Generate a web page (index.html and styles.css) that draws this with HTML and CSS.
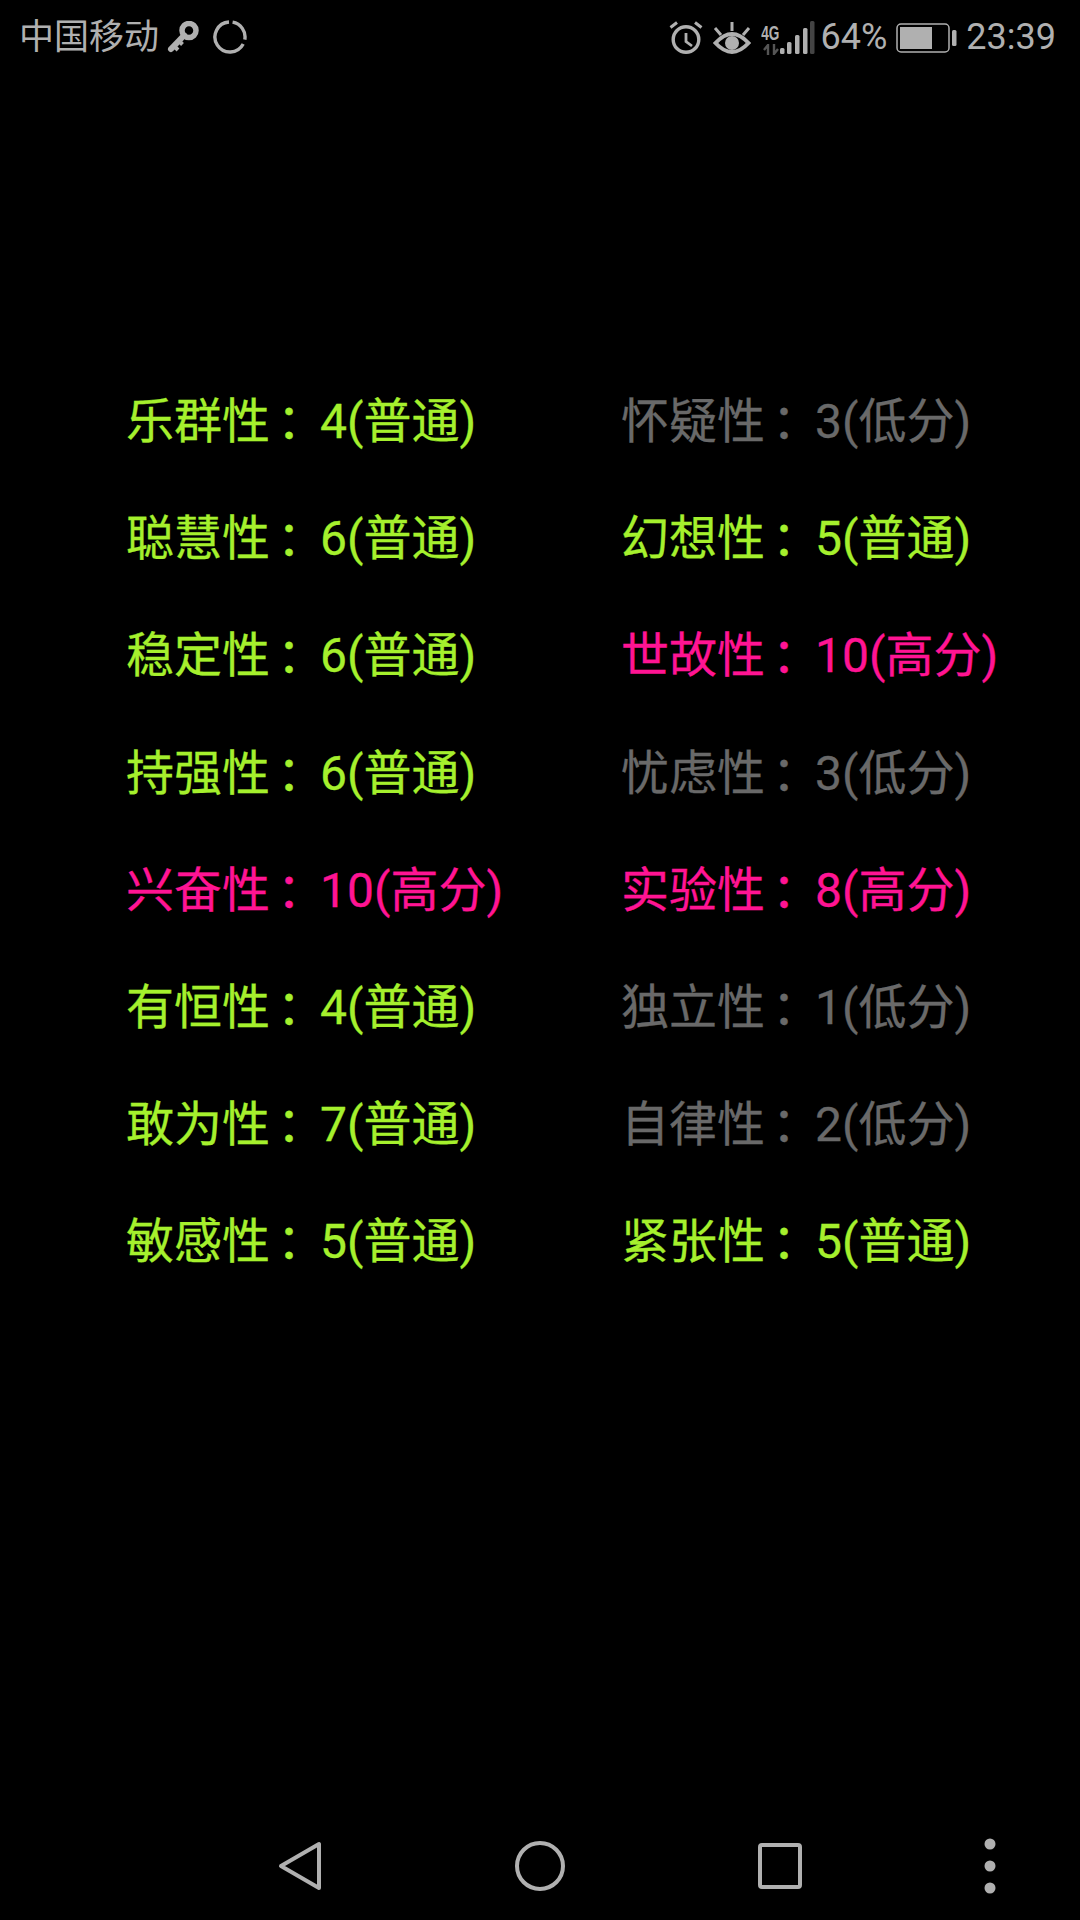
FILE: index.html
```html
<!DOCTYPE html>
<html lang="zh-CN">
<head>
    <meta charset="UTF-8">
    <title>16PF</title>
    <link rel="stylesheet" href="styles.css">
</head>
<body>
    <div id="container">
        <div id="statusBar">
            <div class="statusLeft">
                <span class="carrier">中国移动</span>
                <svg class="keyIcon" width="34" height="34" viewBox="0 0 34 34">
                    <circle cx="23" cy="9.5" r="7" fill="none" stroke="#b0b0b0" stroke-width="5.5"/>
                    <path d="M18 14.5 L5 28" fill="none" stroke="#b0b0b0" stroke-width="6" stroke-linecap="round"/>
                    <path d="M8 25 L12 29 M13 20 L16.5 23.5" fill="none" stroke="#b0b0b0" stroke-width="4"/>
                </svg>
                <svg class="ringIcon" width="36" height="36" viewBox="0 0 36 36">
                    <path d="M20.6 2.2 A15 15 0 0 1 32.8 19.6 M31.2 24 A15 15 0 1 1 17 2" fill="none" stroke="#b0b0b0" stroke-width="3.4"/>
                </svg>
            </div>
            <div class="statusRight">
                <svg width="34" height="36" viewBox="0 0 34 36">
                    <circle cx="17" cy="19.5" r="12.8" fill="none" stroke="#b0b0b0" stroke-width="3.4"/>
                    <path d="M17 13 V21.5 L23 26" fill="none" stroke="#b0b0b0" stroke-width="2.8"/>
                    <path d="M1.5 7.5 L8 2.5 M32.5 7.5 L26 2.5" fill="none" stroke="#b0b0b0" stroke-width="3"/>
                </svg>
                <svg class="eyeIcon" width="38" height="36" viewBox="0 0 38 36">
                    <path d="M2.5 23 Q19 5 35.5 23 Q19 41 2.5 23 Z" fill="none" stroke="#b0b0b0" stroke-width="4"/>
                    <circle cx="19" cy="23" r="7" fill="#b0b0b0"/>
                    <path d="M2 8 L8 15 M19 2 V11 M36 8 L30 15" fill="none" stroke="#b0b0b0" stroke-width="3"/>
                </svg>
                <div class="signal">
                    <div class="netType">
                        <span class="netLabel">4G</span>
                        <svg width="16" height="11" viewBox="0 0 16 11">
                            <path d="M5 11 V1 L1 6 M11 0 V10 L15 5" fill="none" stroke="#555" stroke-width="2.4"/>
                        </svg>
                    </div>
                    <svg class="bars" width="36" height="34" viewBox="0 0 36 34">
                        <rect x="0" y="27" width="4.5" height="6" rx="1.5" fill="#b0b0b0"/>
                        <rect x="7" y="21" width="4.5" height="12" rx="1.5" fill="#b0b0b0"/>
                        <rect x="15" y="14" width="4.5" height="19" rx="1.5" fill="#b0b0b0"/>
                        <rect x="23" y="7" width="4.5" height="26" rx="1.5" fill="#b0b0b0"/>
                        <rect x="30" y="0" width="4.5" height="33" rx="1.5" fill="#444"/>
                    </svg>
                </div>
                <span class="statusText percent">64%</span>
                <svg class="batteryIcon" width="62" height="30" viewBox="0 0 62 30">
                    <rect x="1" y="1" width="52" height="28" rx="4" fill="none" stroke="#b0b0b0" stroke-width="1.5"/>
                    <rect x="4" y="4" width="32" height="22" fill="#b0b0b0"/>
                    <rect x="56" y="7" width="4.5" height="16" rx="1.5" fill="#b0b0b0"/>
                </svg>
                <span class="statusText time">23:39</span>
            </div>
        </div>

        <div id="grid">
            <p class="normal">乐群性<span class="colon">：</span><span class="score">4(普通)</span></p>
            <p class="low">怀疑性<span class="colon">：</span><span class="score">3(低分)</span></p>
            <p class="normal">聪慧性<span class="colon">：</span><span class="score">6(普通)</span></p>
            <p class="normal">幻想性<span class="colon">：</span><span class="score">5(普通)</span></p>
            <p class="normal">稳定性<span class="colon">：</span><span class="score">6(普通)</span></p>
            <p class="high">世故性<span class="colon">：</span><span class="score">10(高分)</span></p>
            <p class="normal">持强性<span class="colon">：</span><span class="score">6(普通)</span></p>
            <p class="low">忧虑性<span class="colon">：</span><span class="score">3(低分)</span></p>
            <p class="high">兴奋性<span class="colon">：</span><span class="score">10(高分)</span></p>
            <p class="high">实验性<span class="colon">：</span><span class="score">8(高分)</span></p>
            <p class="normal">有恒性<span class="colon">：</span><span class="score">4(普通)</span></p>
            <p class="low">独立性<span class="colon">：</span><span class="score">1(低分)</span></p>
            <p class="normal">敢为性<span class="colon">：</span><span class="score">7(普通)</span></p>
            <p class="low">自律性<span class="colon">：</span><span class="score">2(低分)</span></p>
            <p class="normal">敏感性<span class="colon">：</span><span class="score">5(普通)</span></p>
            <p class="normal">紧张性<span class="colon">：</span><span class="score">5(普通)</span></p>
        </div>

        <div id="navBar">
            <svg class="backIcon" width="46" height="52" viewBox="0 0 46 52">
                <path d="M42 4 V48 L4 26 Z" fill="none" stroke="#b0b0b0" stroke-width="4" stroke-linejoin="round"/>
            </svg>
            <svg class="homeIcon" width="50" height="50" viewBox="0 0 50 50">
                <circle cx="25" cy="25" r="23" fill="none" stroke="#b0b0b0" stroke-width="4"/>
            </svg>
            <svg class="recentIcon" width="44" height="46" viewBox="0 0 44 46">
                <rect x="2" y="2" width="40" height="42" rx="2" fill="none" stroke="#b0b0b0" stroke-width="4"/>
            </svg>
            <svg class="menuIcon" width="12" height="56" viewBox="0 0 12 56">
                <circle cx="6" cy="6" r="5.5" fill="#b0b0b0"/>
                <circle cx="6" cy="28" r="5.5" fill="#b0b0b0"/>
                <circle cx="6" cy="50" r="5.5" fill="#b0b0b0"/>
            </svg>
        </div>
    </div>
</body>
</html>
```
FILE: styles.css
```css
* {
    box-sizing: border-box;
}
html, body {
    margin: 0;
    background-color: #000;
}
#container {
    width: 1080px;
    height: 1920px;
    display: flex;
    flex-direction: column;
    font-family: Roboto, "Noto Sans CJK SC", sans-serif;
}
#statusBar {
    height: 72px;
    padding: 3px 24px 0 19px;
    display: flex;
    align-items: center;
    justify-content: space-between;
    color: #b0b0b0;
}
.statusLeft, .statusRight {
    display: flex;
    align-items: center;
}
.carrier {
    font-size: 35px;
    line-height: 69px;
}
.keyIcon {
    margin-left: 7px;
}
.ringIcon {
    margin-left: 12px;
}
.eyeIcon {
    margin-left: 10px;
}
.signal {
    margin-left: 11px;
    display: flex;
    align-items: flex-end;
    height: 34px;
}
.netType {
    width: 18px;
    display: flex;
    flex-direction: column;
    align-items: center;
}
.netLabel {
    font-family: "Liberation Sans", sans-serif;
    font-size: 20px;
    line-height: 22px;
    font-weight: bold;
    transform: scaleX(0.68);
}
.bars {
    display: block;
}
.statusText {
    font-size: 36px;
    line-height: 69px;
}
.percent {
    margin-left: 5px;
}
.batteryIcon {
    margin-left: 9px;
}
.time {
    margin-left: 8px;
}
#grid {
    flex: 1;
    display: grid;
    grid-template-columns: 495px 1fr;
    grid-auto-rows: 117.2px;
    padding: 291px 0 0 126px;
    opacity: 0.999;
}
#grid p {
    margin: 0;
    font-size: 48px;
    line-height: 117px;
    white-space: nowrap;
    -webkit-text-stroke: 0.3px;
}
.colon {
    padding-left: 7px;
    letter-spacing: -7px;
}
.score {
    margin-left: 2px;
}
.normal {
    color: #a5f02d;
}
.low {
    color: #696969;
}
.high {
    color: #ff1493;
}
#navBar {
    height: 108px;
    display: flex;
    align-items: center;
}
.backIcon {
    margin-left: 277px;
}
.homeIcon {
    margin-left: 192px;
}
.recentIcon {
    margin-left: 193px;
}
.menuIcon {
    margin-left: 182px;
}
```
